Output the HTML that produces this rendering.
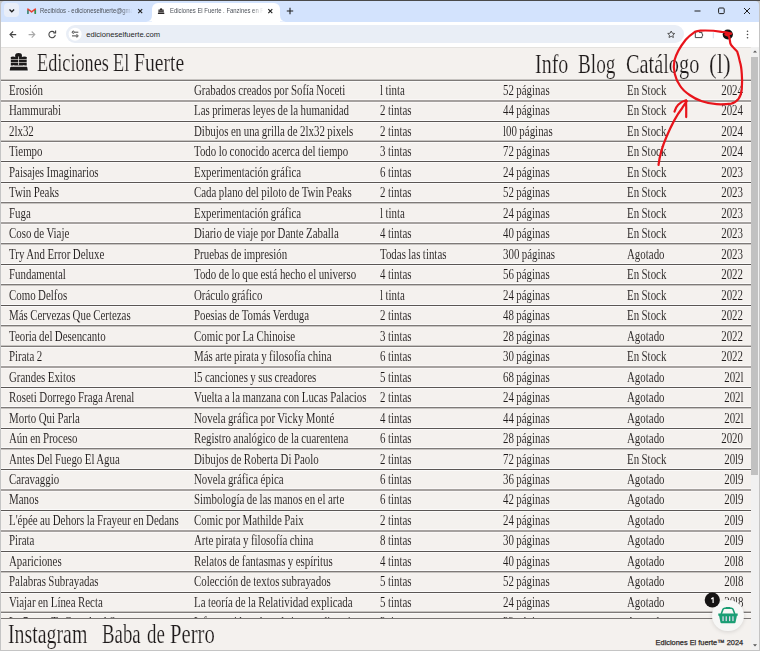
<!DOCTYPE html>
<html><head><meta charset="utf-8">
<style>
*{margin:0;padding:0;box-sizing:border-box}
html,body{width:760px;height:651px;overflow:hidden;background:#5c5c5c}
body{position:relative;font-family:"Liberation Sans",sans-serif}
.a{position:absolute}
#win{position:absolute;left:0;top:0;width:760px;height:651px;background:#c4c4c4;overflow:hidden}
#topb{position:absolute;left:0;top:0;width:760px;height:1px;background:#4a4a4a}
#tabs{position:absolute;left:1px;top:1px;width:757.5px;height:20.5px;background:#d3e3fd;border-radius:4px 4px 0 0}
#tb{position:absolute;left:1px;top:21.5px;width:757.5px;height:26px;background:#fff;border-bottom:1px solid #e4e2df}
#omni{position:absolute;left:66.3px;top:25.2px;width:617.5px;height:17.4px;background:#e9eef6;border-radius:9px}
#page{position:absolute;left:1px;top:47.5px;width:757.5px;height:601.5px;background:#f4f1ee;border-radius:0 0 4px 3px}
.c{position:absolute;font-family:"Liberation Serif",serif;font-size:15.5px;line-height:0;white-space:nowrap;color:#1e1a1a;transform-origin:0 0;transform:scaleX(.703);word-spacing:-0.4px;-webkit-text-stroke:0.06px #f4f1ee}
.c.r{transform-origin:100% 0}
.h{position:absolute;font-family:"Liberation Serif",serif;line-height:0;white-space:nowrap;color:#1f1b1b;transform-origin:0 0;-webkit-text-stroke:0.2px #f4f1ee}
.tt{position:absolute;font-family:"Liberation Sans",sans-serif;font-size:6.8px;line-height:12px;height:12px;white-space:nowrap;color:#4c5159;overflow:hidden;transform-origin:0 0;transform:scaleX(.873)}
.hl{fill:#fdfcfb;opacity:.7}
</style></head><body>
<div id="win">
<div id="topb"></div>
<div id="tabs"></div>
<!-- tab search -->
<div class="a" style="left:4px;top:3px;width:15px;height:14px;background:#e9eef8;border-radius:4px"></div>
<svg class="a" style="left:0;top:0" width="760" height="47">
 <path d="M9.5 9.5 L11.8 11.8 L14.1 9.5" fill="none" stroke="#1f1f1f" stroke-width="1.3"/>
 <!-- gmail -->
 <path d="M27.9 13.8 V9 L31.6 11.9 L35.3 9 V13.8" fill="none" stroke="#ea4335" stroke-width="1.5" stroke-linejoin="round"/>
 <path d="M27.9 10.2 V13.9" stroke="#2a9d8f" stroke-width="1.5"/>
 <path d="M35.3 10.2 V13.9" stroke="#1e9e5a" stroke-width="1.5"/>
 <!-- tab close x -->
 <path d="M138.2 9.2 L142.2 13.2 M142.2 9.2 L138.2 13.2" stroke="#1f1f1f" stroke-width="1.1"/>
</svg>
<!-- active tab -->
<div class="a" style="left:152px;top:2.5px;width:128px;height:19px;background:#fff;border-radius:6px 6px 0 0"></div>
<svg class="a" style="left:146px;top:15px" width="140" height="7">
 <path d="M0 6.5 Q6 6.5 6 0 V6.5 Z" fill="#fff"/>
 <path d="M140 6.5 Q134 6.5 134 0 V6.5 Z" fill="#fff"/>
</svg>
<div class="tt" style="left:39.5px;top:4.8px;width:106px;-webkit-mask-image:linear-gradient(90deg,#000 88%,transparent)">Recibidos - edicioneselfuerte@gmail.com</div>
<div class="tt" style="left:169.5px;top:4.8px;width:107px;-webkit-mask-image:linear-gradient(90deg,#000 88%,transparent)">Ediciones El Fuerte . Fanzines en Rosario</div>
<svg class="a" style="left:0;top:0" width="760" height="47">
 <!-- tab favicon small fortress -->
 <g fill="#2a2626"><path d="M159.9 10 V9.3 Q159.9 8.3 161.1 8.3 Q162.3 8.3 162.3 9.3 V10Z"/><rect x="158.4" y="9.6" width="5.4" height="2.6"/><path d="M158.1 12.5 H164.1 L164.4 13.9 H157.8Z"/></g><path d="M158.4 10.9 H163.8" stroke="#fff" stroke-width=".35"/>
 <path d="M268.3 9.2 L272.3 13.2 M272.3 9.2 L268.3 13.2" stroke="#1f1f1f" stroke-width="1.1"/>
 <!-- plus -->
 <path d="M290 7.8 V14.2 M286.8 11 H293.2" stroke="#1f1f1f" stroke-width="1.1"/>
 <!-- window controls -->
 <path d="M694.5 11 H700.5" stroke="#1f1f1f" stroke-width="1"/>
 <rect x="718.6" y="8" width="5.6" height="5.6" rx="1" fill="none" stroke="#1f1f1f" stroke-width="1"/>
 <path d="M744 8 L750 14 M750 8 L744 14" stroke="#1f1f1f" stroke-width="1"/>
</svg>
<div id="tb"></div>
<div id="omni"></div>
<svg class="a" style="left:0;top:0" width="760" height="48">
 <!-- back -->
 <path d="M16.2 34.6 H10 M13.1 31.5 L10 34.6 L13.1 37.7" fill="none" stroke="#474747" stroke-width="1.1"/>
 <!-- fwd -->
 <path d="M28.6 34.6 H34.8 M31.7 31.5 L34.8 34.6 L31.7 37.7" fill="none" stroke="#a9a9a9" stroke-width="1.1"/>
 <!-- reload -->
 <path d="M55.3 34.9 A3.2 3.2 0 1 1 54.4 32.3" fill="none" stroke="#474747" stroke-width="1.1"/>
 <path d="M55.6 30.6 V32.9 H53.3" fill="none" stroke="#474747" stroke-width="1.1"/>
 <!-- tune icon -->
 <circle cx="75.1" cy="34.2" r="6.5" fill="#fff"/>
 <g stroke="#474747" stroke-width="1" fill="none"><path d="M75 32.2 H78.3"/><circle cx="73.3" cy="32.2" r="1.1"/><path d="M72 35.9 H75.3"/><circle cx="76.9" cy="35.9" r="1.1"/></g>
 <!-- star -->
 <path d="M671.2 31 L672.3 33.2 L674.7 33.5 L672.9 35.1 L673.4 37.5 L671.2 36.3 L669 37.5 L669.5 35.1 L667.7 33.5 L670.1 33.2 Z" fill="none" stroke="#474747" stroke-width="0.9"/>
 <!-- extensions -->
 <path d="M695.3 37.6 V33 L697.4 30.6 L699.2 32.4 H702 V34.2 L703.1 35.1 L702 36.1 V37.6 Z" fill="none" stroke="#474747" stroke-width="1" stroke-linejoin="round"/>
 <path d="M713.3 32.3 V38.3" stroke="#c7d3e8" stroke-width="0.8"/>
 <circle cx="727.8" cy="34.5" r="5.1" fill="#111"/>
 <g fill="#474747"><circle cx="747.5" cy="31.3" r="0.8"/><circle cx="747.5" cy="34.5" r="0.8"/><circle cx="747.5" cy="37.7" r="0.8"/></g>
</svg>
<div class="a" style="left:86.2px;top:34.5px;font-size:7.6px;line-height:0;color:#1f1f1f;white-space:nowrap">edicioneselfuerte.com</div>
<div id="page"></div>

<svg class="a" style="left:0;top:0" width="40" height="80">
 <g fill="none" stroke="#fdfcfb" stroke-width="1.6" stroke-linejoin="round" opacity=".8">
  <path d="M10.8 65.6 V57.2 Q10.8 56.3 13 56.3 Q15.2 56.3 15.2 57 V55.3 Q15.2 53 18.55 53 Q21.9 53 21.9 55.3 V57 Q21.9 56.3 24.3 56.3 Q26.7 56.3 26.7 57.2 V65.6 M10.3 67 H27.2 L27.8 70.6 H9.7 Z"/>
 </g>
 <g fill="#1c1a1a">
  <path d="M15.2 58 V55.3 Q15.2 53.1 18.55 53.1 Q21.9 53.1 21.9 55.3 V58 Z"/>
  <path d="M10.8 58 V57.3 Q10.8 56.4 13 56.4 Q15.2 56.4 15.2 57.3 V58Z"/>
  <path d="M21.9 58 V57.3 Q21.9 56.4 24.3 56.4 Q26.7 56.4 26.7 57.3 V58Z"/>
  <rect x="10.8" y="57.4" width="15.9" height="1.9"/>
  <rect x="10.8" y="60" width="15.9" height="2.2"/>
  <path d="M10.8 62.9 H26.7 V65.6 H24.8 Q23.8 64.2 22.8 65.6 H14.7 Q13.7 64.2 12.7 65.6 H10.8Z"/>
  <path d="M10.3 66.9 H27.2 L27.8 70.6 H9.7 Z"/>
 </g>
 <g fill="#8a8785"><rect x="10.8" y="59.3" width="15.9" height="0.7"/><rect x="10.8" y="62.2" width="15.9" height="0.7"/><rect x="10.8" y="65.6" width="16.2" height="1.3" opacity=".6"/></g>
 <path d="M18.55 56.5 V65.2" stroke="#f6f4f2" stroke-width="0.75"/>
</svg>
<div class="h" style="left:36.98px;top:62.66px;font-size:25.5px;transform:scaleX(0.7152)">Ediciones</div>
<div class="h" style="left:113.09px;top:62.66px;font-size:25.5px;transform:scaleX(0.7143)">El</div>
<div class="h" style="left:133.93px;top:62.66px;font-size:25.5px;transform:scaleX(0.7714)">Fuerte</div>
<div class="h" style="left:534.77px;top:64.09px;font-size:27.2px;transform:scaleX(0.7349)">Info</div>
<div class="h" style="left:578.39px;top:64.09px;font-size:27.2px;transform:scaleX(0.7078)">Blog</div>
<div class="h" style="left:626.05px;top:64.09px;font-size:27.2px;transform:scaleX(0.7469)">Catálogo</div>
<div class="h" style="left:709.15px;top:64.09px;font-size:27.2px;transform:scaleX(0.8478)">(l)</div>

<svg width="760" height="651" class="a" style="left:0;top:0" shape-rendering="crispEdges">
<rect x="1" y="81" width="750" height="1" fill="#fdfcfb" opacity="0.8"/><rect x="1" y="80" width="750" height="1" fill="#7e7a78"/><rect x="1" y="79" width="750" height="1" fill="#c6c3c0"/>
<rect x="1" y="99" width="750" height="1" fill="#fdfcfb" opacity="0.6"/><rect x="1" y="100" width="750" height="1" fill="#a5a19f"/><rect x="1" y="101" width="750" height="1" fill="#a5a19f"/><rect x="1" y="102" width="750" height="1" fill="#fdfcfb" opacity="0.6"/>
<rect x="1" y="120" width="750" height="1" fill="#fdfcfb" opacity="0.8"/><rect x="1" y="121" width="750" height="1" fill="#5a5654"/><rect x="1" y="122" width="750" height="1" fill="#fdfcfb" opacity="0.8"/>
<rect x="1" y="142" width="750" height="1" fill="#fdfcfb" opacity="0.8"/><rect x="1" y="141" width="750" height="1" fill="#7e7a78"/><rect x="1" y="140" width="750" height="1" fill="#c6c3c0"/>
<rect x="1" y="160" width="750" height="1" fill="#fdfcfb" opacity="0.8"/><rect x="1" y="161" width="750" height="1" fill="#5a5654"/><rect x="1" y="162" width="750" height="1" fill="#fdfcfb" opacity="0.8"/>
<rect x="1" y="181" width="750" height="1" fill="#fdfcfb" opacity="0.8"/><rect x="1" y="182" width="750" height="1" fill="#5a5654"/><rect x="1" y="183" width="750" height="1" fill="#fdfcfb" opacity="0.8"/>
<rect x="1" y="201" width="750" height="1" fill="#fdfcfb" opacity="0.8"/><rect x="1" y="202" width="750" height="1" fill="#7e7a78"/><rect x="1" y="203" width="750" height="1" fill="#c6c3c0"/>
<rect x="1" y="221" width="750" height="1" fill="#fdfcfb" opacity="0.6"/><rect x="1" y="222" width="750" height="1" fill="#a5a19f"/><rect x="1" y="223" width="750" height="1" fill="#a5a19f"/><rect x="1" y="224" width="750" height="1" fill="#fdfcfb" opacity="0.6"/>
<rect x="1" y="242" width="750" height="1" fill="#fdfcfb" opacity="0.8"/><rect x="1" y="243" width="750" height="1" fill="#7e7a78"/><rect x="1" y="244" width="750" height="1" fill="#c6c3c0"/>
<rect x="1" y="263" width="750" height="1" fill="#fdfcfb" opacity="0.8"/><rect x="1" y="264" width="750" height="1" fill="#5a5654"/><rect x="1" y="265" width="750" height="1" fill="#fdfcfb" opacity="0.8"/>
<rect x="1" y="283" width="750" height="1" fill="#fdfcfb" opacity="0.8"/><rect x="1" y="284" width="750" height="1" fill="#7e7a78"/><rect x="1" y="285" width="750" height="1" fill="#c6c3c0"/>
<rect x="1" y="304" width="750" height="1" fill="#fdfcfb" opacity="0.8"/><rect x="1" y="305" width="750" height="1" fill="#5a5654"/><rect x="1" y="306" width="750" height="1" fill="#fdfcfb" opacity="0.8"/>
<rect x="1" y="324" width="750" height="1" fill="#fdfcfb" opacity="0.8"/><rect x="1" y="325" width="750" height="1" fill="#7e7a78"/><rect x="1" y="326" width="750" height="1" fill="#c6c3c0"/>
<rect x="1" y="347" width="750" height="1" fill="#fdfcfb" opacity="0.8"/><rect x="1" y="346" width="750" height="1" fill="#7e7a78"/><rect x="1" y="345" width="750" height="1" fill="#c6c3c0"/>
<rect x="1" y="365" width="750" height="1" fill="#fdfcfb" opacity="0.6"/><rect x="1" y="366" width="750" height="1" fill="#a5a19f"/><rect x="1" y="367" width="750" height="1" fill="#a5a19f"/><rect x="1" y="368" width="750" height="1" fill="#fdfcfb" opacity="0.6"/>
<rect x="1" y="386" width="750" height="1" fill="#fdfcfb" opacity="0.8"/><rect x="1" y="387" width="750" height="1" fill="#5a5654"/><rect x="1" y="388" width="750" height="1" fill="#fdfcfb" opacity="0.8"/>
<rect x="1" y="406" width="750" height="1" fill="#fdfcfb" opacity="0.8"/><rect x="1" y="407" width="750" height="1" fill="#7e7a78"/><rect x="1" y="408" width="750" height="1" fill="#c6c3c0"/>
<rect x="1" y="427" width="750" height="1" fill="#fdfcfb" opacity="0.8"/><rect x="1" y="428" width="750" height="1" fill="#5a5654"/><rect x="1" y="429" width="750" height="1" fill="#fdfcfb" opacity="0.8"/>
<rect x="1" y="447" width="750" height="1" fill="#fdfcfb" opacity="0.8"/><rect x="1" y="448" width="750" height="1" fill="#7e7a78"/><rect x="1" y="449" width="750" height="1" fill="#c6c3c0"/>
<rect x="1" y="468" width="750" height="1" fill="#fdfcfb" opacity="0.8"/><rect x="1" y="469" width="750" height="1" fill="#5a5654"/><rect x="1" y="470" width="750" height="1" fill="#fdfcfb" opacity="0.8"/>
<rect x="1" y="488" width="750" height="1" fill="#fdfcfb" opacity="0.6"/><rect x="1" y="489" width="750" height="1" fill="#a5a19f"/><rect x="1" y="490" width="750" height="1" fill="#a5a19f"/><rect x="1" y="491" width="750" height="1" fill="#fdfcfb" opacity="0.6"/>
<rect x="1" y="509" width="750" height="1" fill="#fdfcfb" opacity="0.8"/><rect x="1" y="510" width="750" height="1" fill="#5a5654"/><rect x="1" y="511" width="750" height="1" fill="#fdfcfb" opacity="0.8"/>
<rect x="1" y="529" width="750" height="1" fill="#fdfcfb" opacity="0.6"/><rect x="1" y="530" width="750" height="1" fill="#a5a19f"/><rect x="1" y="531" width="750" height="1" fill="#a5a19f"/><rect x="1" y="532" width="750" height="1" fill="#fdfcfb" opacity="0.6"/>
<rect x="1" y="550" width="750" height="1" fill="#fdfcfb" opacity="0.8"/><rect x="1" y="551" width="750" height="1" fill="#5a5654"/><rect x="1" y="552" width="750" height="1" fill="#fdfcfb" opacity="0.8"/>
<rect x="1" y="570" width="750" height="1" fill="#fdfcfb" opacity="0.8"/><rect x="1" y="571" width="750" height="1" fill="#7e7a78"/><rect x="1" y="572" width="750" height="1" fill="#c6c3c0"/>
<rect x="1" y="591" width="750" height="1" fill="#fdfcfb" opacity="0.8"/><rect x="1" y="592" width="750" height="1" fill="#5a5654"/><rect x="1" y="593" width="750" height="1" fill="#fdfcfb" opacity="0.8"/>
<rect x="1" y="613" width="750" height="1" fill="#fdfcfb" opacity="0.8"/><rect x="1" y="612" width="750" height="1" fill="#7e7a78"/><rect x="1" y="611" width="750" height="1" fill="#c6c3c0"/>
</svg>
<div class="c" style="left:8.7px;top:89.87px">Erosión</div>
<div class="c" style="left:193.9px;top:89.87px">Grabados creados por Sofía Noceti</div>
<div class="c" style="left:379.6px;top:89.87px">l tinta</div>
<div class="c" style="left:503.4px;top:89.87px">52 páginas</div>
<div class="c" style="left:627.2px;top:89.87px">En Stock</div>
<div class="c r" style="right:16.600000000000023px;top:89.87px">2024</div>
<div class="c" style="left:8.7px;top:110.35px">Hammurabi</div>
<div class="c" style="left:193.9px;top:110.35px">Las primeras leyes de la humanidad</div>
<div class="c" style="left:379.6px;top:110.35px">2 tintas</div>
<div class="c" style="left:503.4px;top:110.35px">44 páginas</div>
<div class="c" style="left:627.2px;top:110.35px">En Stock</div>
<div class="c r" style="right:16.600000000000023px;top:110.35px">2024</div>
<div class="c" style="left:8.7px;top:130.83px">2lx32</div>
<div class="c" style="left:193.9px;top:130.83px">Dibujos en una grilla de 2lx32 pixels</div>
<div class="c" style="left:379.6px;top:130.83px">2 tintas</div>
<div class="c" style="left:503.4px;top:130.83px">l00 páginas</div>
<div class="c" style="left:627.2px;top:130.83px">En Stock</div>
<div class="c r" style="right:16.600000000000023px;top:130.83px">2024</div>
<div class="c" style="left:8.7px;top:151.31px">Tiempo</div>
<div class="c" style="left:193.9px;top:151.31px">Todo lo conocido acerca del tiempo</div>
<div class="c" style="left:379.6px;top:151.31px">3 tintas</div>
<div class="c" style="left:503.4px;top:151.31px">72 páginas</div>
<div class="c" style="left:627.2px;top:151.31px">En Stock</div>
<div class="c r" style="right:16.600000000000023px;top:151.31px">2024</div>
<div class="c" style="left:8.7px;top:171.79px">Paisajes Imaginarios</div>
<div class="c" style="left:193.9px;top:171.79px">Experimentación gráfica</div>
<div class="c" style="left:379.6px;top:171.79px">6 tintas</div>
<div class="c" style="left:503.4px;top:171.79px">24 páginas</div>
<div class="c" style="left:627.2px;top:171.79px">En Stock</div>
<div class="c r" style="right:16.600000000000023px;top:171.79px">2023</div>
<div class="c" style="left:8.7px;top:192.27px">Twin Peaks</div>
<div class="c" style="left:193.9px;top:192.27px">Cada plano del piloto de Twin Peaks</div>
<div class="c" style="left:379.6px;top:192.27px">2 tintas</div>
<div class="c" style="left:503.4px;top:192.27px">52 páginas</div>
<div class="c" style="left:627.2px;top:192.27px">En Stock</div>
<div class="c r" style="right:16.600000000000023px;top:192.27px">2023</div>
<div class="c" style="left:8.7px;top:212.75px">Fuga</div>
<div class="c" style="left:193.9px;top:212.75px">Experimentación gráfica</div>
<div class="c" style="left:379.6px;top:212.75px">l tinta</div>
<div class="c" style="left:503.4px;top:212.75px">24 páginas</div>
<div class="c" style="left:627.2px;top:212.75px">En Stock</div>
<div class="c r" style="right:16.600000000000023px;top:212.75px">2023</div>
<div class="c" style="left:8.7px;top:233.23px">Coso de Viaje</div>
<div class="c" style="left:193.9px;top:233.23px">Diario de viaje por Dante Zaballa</div>
<div class="c" style="left:379.6px;top:233.23px">4 tintas</div>
<div class="c" style="left:503.4px;top:233.23px">40 páginas</div>
<div class="c" style="left:627.2px;top:233.23px">En Stock</div>
<div class="c r" style="right:16.600000000000023px;top:233.23px">2023</div>
<div class="c" style="left:8.7px;top:253.71px">Try And Error Deluxe</div>
<div class="c" style="left:193.9px;top:253.71px">Pruebas de impresión</div>
<div class="c" style="left:379.6px;top:253.71px">Todas las tintas</div>
<div class="c" style="left:503.4px;top:253.71px">300 páginas</div>
<div class="c" style="left:627.2px;top:253.71px">Agotado</div>
<div class="c r" style="right:16.600000000000023px;top:253.71px">2023</div>
<div class="c" style="left:8.7px;top:274.19px">Fundamental</div>
<div class="c" style="left:193.9px;top:274.19px">Todo de lo que está hecho el universo</div>
<div class="c" style="left:379.6px;top:274.19px">4 tintas</div>
<div class="c" style="left:503.4px;top:274.19px">56 páginas</div>
<div class="c" style="left:627.2px;top:274.19px">En Stock</div>
<div class="c r" style="right:16.600000000000023px;top:274.19px">2022</div>
<div class="c" style="left:8.7px;top:294.67px">Como Delfos</div>
<div class="c" style="left:193.9px;top:294.67px">Oráculo gráfico</div>
<div class="c" style="left:379.6px;top:294.67px">l tinta</div>
<div class="c" style="left:503.4px;top:294.67px">24 páginas</div>
<div class="c" style="left:627.2px;top:294.67px">En Stock</div>
<div class="c r" style="right:16.600000000000023px;top:294.67px">2022</div>
<div class="c" style="left:8.7px;top:315.15px">Más Cervezas Que Certezas</div>
<div class="c" style="left:193.9px;top:315.15px">Poesias de Tomás Verduga</div>
<div class="c" style="left:379.6px;top:315.15px">2 tintas</div>
<div class="c" style="left:503.4px;top:315.15px">48 páginas</div>
<div class="c" style="left:627.2px;top:315.15px">En Stock</div>
<div class="c r" style="right:16.600000000000023px;top:315.15px">2022</div>
<div class="c" style="left:8.7px;top:335.63px">Teoria del Desencanto</div>
<div class="c" style="left:193.9px;top:335.63px">Comic por La Chinoise</div>
<div class="c" style="left:379.6px;top:335.63px">3 tintas</div>
<div class="c" style="left:503.4px;top:335.63px">28 páginas</div>
<div class="c" style="left:627.2px;top:335.63px">Agotado</div>
<div class="c r" style="right:16.600000000000023px;top:335.63px">2022</div>
<div class="c" style="left:8.7px;top:356.11px">Pirata 2</div>
<div class="c" style="left:193.9px;top:356.11px">Más arte pirata y filosofía china</div>
<div class="c" style="left:379.6px;top:356.11px">6 tintas</div>
<div class="c" style="left:503.4px;top:356.11px">30 páginas</div>
<div class="c" style="left:627.2px;top:356.11px">En Stock</div>
<div class="c r" style="right:16.600000000000023px;top:356.11px">2022</div>
<div class="c" style="left:8.7px;top:376.59px">Grandes Exitos</div>
<div class="c" style="left:193.9px;top:376.59px">l5 canciones y sus creadores</div>
<div class="c" style="left:379.6px;top:376.59px">5 tintas</div>
<div class="c" style="left:503.4px;top:376.59px">68 páginas</div>
<div class="c" style="left:627.2px;top:376.59px">Agotado</div>
<div class="c r" style="right:16.600000000000023px;top:376.59px">202l</div>
<div class="c" style="left:8.7px;top:397.07px">Roseti Dorrego Fraga Arenal</div>
<div class="c" style="left:193.9px;top:397.07px">Vuelta a la manzana con Lucas Palacios</div>
<div class="c" style="left:379.6px;top:397.07px">2 tintas</div>
<div class="c" style="left:503.4px;top:397.07px">24 páginas</div>
<div class="c" style="left:627.2px;top:397.07px">Agotado</div>
<div class="c r" style="right:16.600000000000023px;top:397.07px">202l</div>
<div class="c" style="left:8.7px;top:417.55px">Morto Qui Parla</div>
<div class="c" style="left:193.9px;top:417.55px">Novela gráfica por Vicky Monté</div>
<div class="c" style="left:379.6px;top:417.55px">4 tintas</div>
<div class="c" style="left:503.4px;top:417.55px">44 páginas</div>
<div class="c" style="left:627.2px;top:417.55px">Agotado</div>
<div class="c r" style="right:16.600000000000023px;top:417.55px">202l</div>
<div class="c" style="left:8.7px;top:438.03px">Aún en Proceso</div>
<div class="c" style="left:193.9px;top:438.03px">Registro analógico de la cuarentena</div>
<div class="c" style="left:379.6px;top:438.03px">6 tintas</div>
<div class="c" style="left:503.4px;top:438.03px">28 páginas</div>
<div class="c" style="left:627.2px;top:438.03px">Agotado</div>
<div class="c r" style="right:16.600000000000023px;top:438.03px">2020</div>
<div class="c" style="left:8.7px;top:458.51px">Antes Del Fuego El Agua</div>
<div class="c" style="left:193.9px;top:458.51px">Dibujos de Roberta Di Paolo</div>
<div class="c" style="left:379.6px;top:458.51px">2 tintas</div>
<div class="c" style="left:503.4px;top:458.51px">72 páginas</div>
<div class="c" style="left:627.2px;top:458.51px">En Stock</div>
<div class="c r" style="right:16.600000000000023px;top:458.51px">20l9</div>
<div class="c" style="left:8.7px;top:478.99px">Caravaggio</div>
<div class="c" style="left:193.9px;top:478.99px">Novela gráfica épica</div>
<div class="c" style="left:379.6px;top:478.99px">6 tintas</div>
<div class="c" style="left:503.4px;top:478.99px">36 páginas</div>
<div class="c" style="left:627.2px;top:478.99px">Agotado</div>
<div class="c r" style="right:16.600000000000023px;top:478.99px">20l9</div>
<div class="c" style="left:8.7px;top:499.47px">Manos</div>
<div class="c" style="left:193.9px;top:499.47px">Simbología de las manos en el arte</div>
<div class="c" style="left:379.6px;top:499.47px">6 tintas</div>
<div class="c" style="left:503.4px;top:499.47px">42 páginas</div>
<div class="c" style="left:627.2px;top:499.47px">Agotado</div>
<div class="c r" style="right:16.600000000000023px;top:499.47px">20l9</div>
<div class="c" style="left:8.7px;top:519.95px">L'épée au Dehors la Frayeur en Dedans</div>
<div class="c" style="left:193.9px;top:519.95px">Comic por Mathilde Paix</div>
<div class="c" style="left:379.6px;top:519.95px">2 tintas</div>
<div class="c" style="left:503.4px;top:519.95px">24 páginas</div>
<div class="c" style="left:627.2px;top:519.95px">Agotado</div>
<div class="c r" style="right:16.600000000000023px;top:519.95px">20l9</div>
<div class="c" style="left:8.7px;top:540.43px">Pirata</div>
<div class="c" style="left:193.9px;top:540.43px">Arte pirata y filosofía china</div>
<div class="c" style="left:379.6px;top:540.43px">8 tintas</div>
<div class="c" style="left:503.4px;top:540.43px">30 páginas</div>
<div class="c" style="left:627.2px;top:540.43px">Agotado</div>
<div class="c r" style="right:16.600000000000023px;top:540.43px">20l9</div>
<div class="c" style="left:8.7px;top:560.91px">Apariciones</div>
<div class="c" style="left:193.9px;top:560.91px">Relatos de fantasmas y espíritus</div>
<div class="c" style="left:379.6px;top:560.91px">4 tintas</div>
<div class="c" style="left:503.4px;top:560.91px">40 páginas</div>
<div class="c" style="left:627.2px;top:560.91px">Agotado</div>
<div class="c r" style="right:16.600000000000023px;top:560.91px">20l8</div>
<div class="c" style="left:8.7px;top:581.39px">Palabras Subrayadas</div>
<div class="c" style="left:193.9px;top:581.39px">Colección de textos subrayados</div>
<div class="c" style="left:379.6px;top:581.39px">5 tintas</div>
<div class="c" style="left:503.4px;top:581.39px">52 páginas</div>
<div class="c" style="left:627.2px;top:581.39px">Agotado</div>
<div class="c r" style="right:16.600000000000023px;top:581.39px">20l8</div>
<div class="c" style="left:8.7px;top:601.87px">Viajar en Línea Recta</div>
<div class="c" style="left:193.9px;top:601.87px">La teoría de la Relatividad explicada</div>
<div class="c" style="left:379.6px;top:601.87px">5 tintas</div>
<div class="c" style="left:503.4px;top:601.87px">24 páginas</div>
<div class="c" style="left:627.2px;top:601.87px">Agotado</div>
<div class="c r" style="right:16.600000000000023px;top:601.87px">20l8</div>
<div class="c" style="left:8.7px;top:622.35px">La Panza Te Guarda el Secreto</div>
<div class="c" style="left:193.9px;top:622.35px">Información sobre el sistema digestivo</div>
<div class="c" style="left:379.6px;top:622.35px">3 tintas</div>
<div class="c" style="left:503.4px;top:622.35px">32 páginas</div>
<div class="c" style="left:627.2px;top:622.35px">Agotado</div>
<div class="c r" style="right:16.600000000000023px;top:622.35px">20l8</div>
<!-- footer -->
<div class="a" style="left:1px;top:617.8px;width:750px;height:32px;background:#f4f1ee;border-top:1.2px solid #7a7674"></div>
<div class="h" style="left:8.35px;top:634.06px;font-size:26.4px;transform:scaleX(0.7519)">Instagram</div>
<div class="h" style="left:102.19px;top:634.06px;font-size:26.4px;transform:scaleX(0.7132)">Baba</div>
<div class="h" style="left:146.58px;top:634.06px;font-size:26.4px;transform:scaleX(0.7174)">de</div>
<div class="h" style="left:169.52px;top:634.06px;font-size:26.4px;transform:scaleX(0.7836)">Perro</div>

<div class="a" style="left:655.6px;top:642.8px;font-size:7.4px;line-height:0;white-space:nowrap;color:#2e2a29;-webkit-text-stroke:0.25px #2e2a29">Ediciones El fuerte™ 2024</div>

<!-- scrollbar -->
<div class="a" style="left:750.5px;top:47px;width:8.5px;height:603px;background:#f1f1f1"></div>
<div class="a" style="left:751.3px;top:56.5px;width:7px;height:418.5px;background:#c1c1c1"></div>
<svg class="a" style="left:0;top:0" width="760" height="651">
 <path d="M753 52.6 L755 50.4 L757 52.6 Z" fill="#555"/>
 <path d="M753 644.3 L755 646.5 L757 644.3 Z" fill="#555"/>
</svg>

<div class="a" style="left:712.4px;top:600.3px;width:31.2px;height:31.2px;border-radius:50%;background:#f7f7f6;box-shadow:0 1px 4px rgba(0,0,0,.12)"></div>
<svg class="a" style="left:0;top:0" width="760" height="651">
 <path d="M721.2 614 L723 609.3 Q723.4 608.3 724.5 608.3 H731.5 Q732.6 608.3 733 609.3 L734.8 614" fill="none" stroke="#1a9e74" stroke-width="1.6" stroke-linejoin="round"/>
 <rect x="725.6" y="607.1" width="4.8" height="1.8" rx="0.6" fill="#1a9e74"/>
 <path d="M718.3 613.4 H737.7 V615.8 H736.9 L735.5 622.4 Q735.3 623.2 734.5 623.2 H721.5 Q720.7 623.2 720.5 622.4 L719.1 615.8 H718.3Z" fill="#1a9e74"/>
 <g fill="#dcd8ea"><rect x="722.4" y="616.3" width="1.3" height="4.8"/><rect x="725.6" y="616.3" width="1.3" height="4.8"/><rect x="729" y="616.3" width="1.3" height="4.8"/><rect x="732.3" y="616.3" width="1.3" height="4.8"/></g>
 <circle cx="712.3" cy="600" r="7.6" fill="#161414"/>
 <path d="M711 598.3 L712.7 597.3 H713.7 V602.9 H712.5 V598.9 L711.4 599.5 Z" fill="#fff"/>
</svg>


<svg class="a" style="left:0;top:0" width="760" height="651">
 <g fill="none" stroke="#e8141b" stroke-width="2.2" stroke-linecap="round" stroke-linejoin="round">
  <path d="M737.2 51.6 C 735 49 731 46 730.3 43.3 C 729.8 40 729.5 37.5 728.9 36 L 725.4 34.6 L 731.2 33.6 C 729 33 724.5 32 721.6 31.8 C 716 30.9 705 30.4 700.4 30.6 C 698 30.8 696.5 31.2 694.9 31.8 C 691 34.5 688 37 685.7 39.7 C 681.5 45 676.5 52 674.4 60.6 C 673.2 66 673.5 69 674.8 74.1 C 676 79 677 81.5 679.7 85.2 C 682 89 686 92.5 689.6 95 C 693 97.5 697 99.6 701.9 101.2 C 707 102.9 712 104 716.6 104.2 C 722 104.5 727 104.2 731.3 103.6 C 735 103 737 101 738.7 98.7 C 740.6 96 741.5 92 741.8 88.9 C 742.2 83 742.2 78 741.8 74.1 C 741.5 69 741 65 739.9 61.9 C 739.2 58 738.2 54.5 737.2 51.6"/>
  <path d="M658.5 165 C 659.5 157 662.5 146 666.5 136.8 C 670 128.5 676 116 681.9 108.5 C 683.5 106.2 685 103.5 686.8 101.1"/>
  <path d="M674.5 111.6 C 675.5 108 676.5 106.5 678.2 104.8 C 680.5 102.5 683 101 686 100.2 C 686.3 106 686.3 112 686.2 117.1"/>
 </g>
</svg>

</div>
</body></html>
